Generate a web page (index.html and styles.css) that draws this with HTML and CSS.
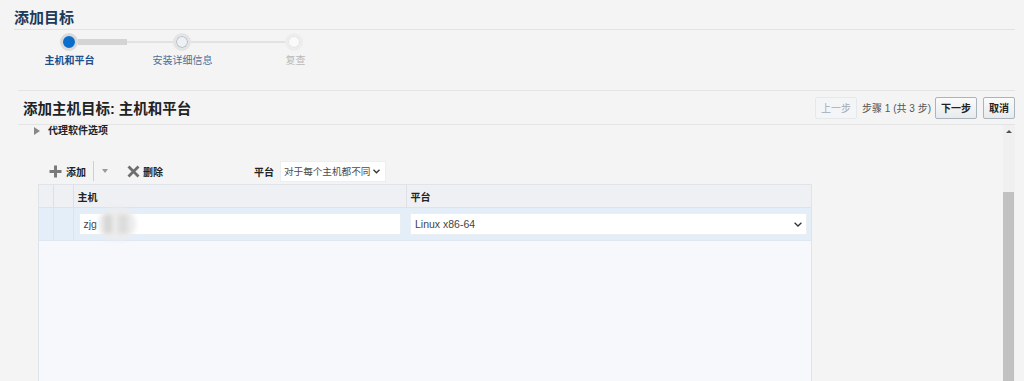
FILE: index.html
```html
<!DOCTYPE html>
<html lang="zh-CN">
<head>
    <meta charset="UTF-8">
    <title>添加目标</title>
    <link rel="stylesheet" href="styles.css">
</head>
<body>
    <div class="train">
        <h1 class="train-title">添加目标</h1>
        <div class="train-track">
            <span class="node node-current"></span>
            <span class="link link-done"></span>
            <span class="node node-next"></span>
            <span class="link"></span>
            <span class="node node-later"></span>
        </div>
        <ul class="train-labels">
            <li class="current">主机和平台</li>
            <li class="next">安装详细信息</li>
            <li class="later">复查</li>
        </ul>
    </div>

    <div class="panel">
        <div class="panel-head">
            <h2>添加主机目标: 主机和平台</h2>
            <div class="nav">
                <button class="btn btn-off" disabled>上一步</button>
                <span class="step-count">步骤 1 (共 3 步)</span>
                <button class="btn">下一步</button>
                <button class="btn">取消</button>
            </div>
        </div>
        <div class="panel-body">
            <div class="panel-content">
                <div class="disclosure"><span class="tri"></span>代理软件选项</div>

                <div class="toolbar">
                    <span class="tb-btn">
                        <svg width="13" height="13" viewBox="0 0 13 13"><path d="M6.5 0.5v12M0.5 6.5h12" stroke="#7a7a7a" stroke-width="3"/></svg>
                        添加
                    </span>
                    <span class="tb-sep"></span>
                    <span class="tb-drop"></span>
                    <span class="tb-btn tb-del">
                        <svg width="13" height="13" viewBox="0 0 13 13"><path d="M1.5 1.5l10 10M11.5 1.5l-10 10" stroke="#6e6e6e" stroke-width="2.8"/></svg>
                        删除
                    </span>
                    <span class="tb-label">平台</span>
                    <span class="pick pick-mode">
                        对于每个主机都不同
                        <svg width="7" height="5" viewBox="0 0 7 5"><path d="M0.5 0.8l3 3 3-3" fill="none" stroke="#333" stroke-width="1.3"/></svg>
                    </span>
                </div>

                <div class="grid">
                    <table>
                        <colgroup>
                            <col class="c-sel">
                            <col class="c-sel2">
                            <col class="c-host">
                            <col>
                        </colgroup>
                        <thead>
                            <tr>
                                <th></th>
                                <th></th>
                                <th>主机</th>
                                <th>平台</th>
                            </tr>
                        </thead>
                        <tbody>
                            <tr>
                                <td class="mark"></td>
                                <td class="mark"></td>
                                <td>
                                    <div class="field">zjg<span class="masked"></span></div>
                                </td>
                                <td>
                                    <div class="pick pick-row">
                                        Linux x86-64
                                        <svg width="8" height="5" viewBox="0 0 8 5"><path d="M0.6 0.8l3.4 3.2 3.4-3.2" fill="none" stroke="#333" stroke-width="1.3"/></svg>
                                    </div>
                                </td>
                            </tr>
                        </tbody>
                    </table>
                </div>
            </div>
            <div class="vscroll">
                <span class="vscroll-up"></span>
                <span class="vscroll-thumb"></span>
            </div>
        </div>
    </div>
</body>
</html>
```

FILE: styles.css
```css
html,body{margin: 0;padding: 0;}
body{background: #f4f4f4;font-family: "Liberation Sans", "Noto Sans CJK SC", sans-serif;font-size: 10px;color: #333;overflow: hidden;}
ul,li{list-style: none;margin: 0;padding: 0;}
svg{flex: none;}

/* 步骤条 */
.train-title{margin: 0 9px 0 14px;padding: 8px 0 1px;font-size: 15px;line-height: 20px;font-weight: bold;color: #1c3a5a;border-bottom: 1px solid #e2e2e2;}
.train-track{display: flex;align-items: center;height: 18px;margin: 3px 0 0 60px;}
.node{box-sizing: border-box;flex: none;width: 18px;height: 18px;border-radius: 50%;}
.node-current{background: #0b6dcb;border: 3px solid #d9d9d9;}
.node-next{background: #eef1f4;border: 3px solid #e4e4e4;box-shadow: inset 0 0 0 1px #b3bcc6;}
.node-later{background: #fafafa;border: 3px solid #ededed;box-shadow: inset 0 0 0 1px #e3e3e3;}
.link{flex: none;width: 94px;height: 6px;background: linear-gradient(#e2e2e2,#e2e2e2) 0 2px/100% 2px no-repeat;}
.link-done{width: 95px;background: linear-gradient(#d4d4d4,#d4d4d4) 0 0/49px 6px no-repeat, linear-gradient(#e2e2e2,#e2e2e2) 0 2px/100% 2px no-repeat;}
.train-labels{display: flex;margin: 3px 0 0 13px;}
.train-labels li{width: 113px;text-align: center;line-height: 14px;}
.train-labels .current{color: #1d4f8c;font-weight: bold;}
.train-labels .next{color: #4f6f93;}
.train-labels .later{color: #b8b8b8;}

/* 面板 */
.panel{margin: 22px 9px 0 18px;border-top: 1px solid #e4e4e4;}
.panel-head{display: flex;align-items: center;justify-content: space-between;height: 33px;padding-left: 5px;border-bottom: 1px solid #e4e4e4;}
.panel-head h2{margin: 0;font-size: 14.5px;font-weight: bold;color: #222;}
.nav{display: flex;align-items: center;}
.btn{box-sizing: border-box;height: 22px;padding: 0 5px;font-family: inherit;font-size: 10px;font-weight: bold;color: #222;border: 1px solid #a9b4bf;border-radius: 2px;background: linear-gradient(#fbfbfb,#e8eaec);}
.btn + .btn{margin-left: 6px;}
.btn-off{font-weight: normal;color: #a3abb4;border-color: #e6e9ec;background: #f3f5f7;}
.step-count{margin: 0 4px 0 5px;color: #555;}

.panel-body{display: flex;height: 256px;overflow: hidden;}
.panel-content{flex: 1;}
.vscroll{display: flex;flex-direction: column;align-items: center;width: 12px;background: #f0f0f0;}
.vscroll-up{width: 0;height: 0;margin-top: 5px;border-left: 3px solid transparent;border-right: 3px solid transparent;border-bottom: 3px solid #505050;}
.vscroll-thumb{align-self: stretch;flex: 1;margin: 59px 1px 0 0;background: #c1c1c1;}

.disclosure{display: flex;align-items: center;padding-left: 16px;line-height: 12px;color: #222;font-weight: bold;}
.tri{width: 0;height: 0;margin-right: 8px;border-left: 6px solid #888;border-top: 4.5px solid transparent;border-bottom: 4.5px solid transparent;}

/* 工具栏 */
.toolbar{display: flex;align-items: center;height: 22px;margin-top: 23px;padding-left: 31px;white-space: nowrap;}
.tb-btn{display: flex;align-items: center;gap: 4px;color: #222;font-weight: bold;}
.tb-sep{width: 1px;height: 20px;margin-left: 7px;background: #cfcfcf;}
.tb-drop{width: 0;height: 0;margin-left: 8px;border-left: 3px solid transparent;border-right: 3px solid transparent;border-top: 4px solid #9a9a9a;}
.tb-del{margin-left: 19px;gap: 3px;}
.tb-label{margin-left: 91px;color: #222;font-weight: bold;}
.pick{display: flex;align-items: center;justify-content: space-between;box-sizing: border-box;background: #fff;color: #4a4a4a;border: 1px solid #eceff2;white-space: nowrap;}
.pick-mode{width: 106px;height: 21px;margin-left: 6px;padding: 0 5px 0 3px;overflow: hidden;font-size: 9.6px;}

/* 表格 */
.grid{box-sizing: border-box;width: 774px;height: 220px;margin: 2px 0 0 20px;border: 1px solid #dfe4ea;background: #f7f8fc;}
.grid table{width: 100%;border-collapse: collapse;table-layout: fixed;}
.c-sel{width: 14px;}
.c-sel2{width: 20px;}
.c-host{width: 333px;}
.grid th{height: 22px;padding: 0 0 0 4px;text-align: left;font-weight: bold;color: #222;background: #eef0f3;border-right: 1px solid #dde1e6;border-bottom: 1px solid #dde3ea;}
.grid th:last-child{border-right: 0;}
.grid td{height: 32px;padding: 0 5px;background: #e4eef9;border-bottom: 1px solid #dfe8f1;}
.grid td.mark{padding: 0;border-right: 1px solid #d9e4ef;}
.grid td:last-child{padding: 0 4px;}
.field{display: flex;align-items: center;box-sizing: border-box;height: 22px;padding-left: 4px;background: #fff;border: 1px solid #e9eef3;color: #444;font-size: 10.5px;}
.masked{display: inline-block;width: 38px;height: 32px;margin: -5px 0 -5px 1px;border-radius: 16px;background: linear-gradient(90deg, transparent 6px, #d6d6d6 6px, #d6d6d6 14px, transparent 14px, transparent 20px, #dcdcdc 20px, #dcdcdc 30px, transparent 30px) center/100% 18px no-repeat, #ececec;filter: blur(2px);}
.pick-row{height: 22px;padding: 0 4px 0 4px;font-size: 10.5px;color: #444;}
```
